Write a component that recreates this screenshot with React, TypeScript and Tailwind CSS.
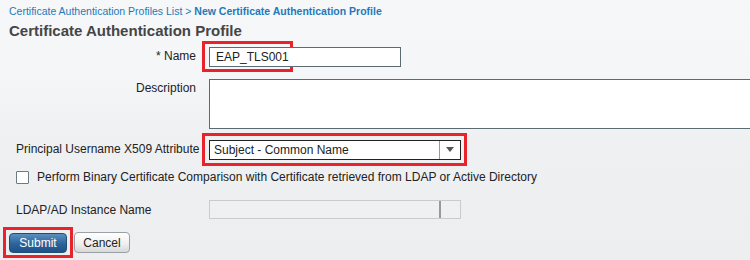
import React from "react";

export default function App() {
  const font = { fontFamily: '"Liberation Sans", Arial, sans-serif' };
  return (
    <div
      className="w-[750px] h-[260px] overflow-hidden bg-[linear-gradient(to_bottom,#f6f7f9_0px,#f5f6f8_70px,#eef0f2_140px,#eceef0_260px)] text-[12px] text-[#222]"
      style={font}
    >
      <div className="pl-[9px] pt-[4px] text-[10.5px] text-[#1f7ab8] leading-[14px] whitespace-nowrap">
        <span>Certificate Authentication Profiles List &gt; </span>
        <span className="font-bold">New Certificate Authentication Profile</span>
      </div>
      <div className="pl-[9px] pt-[4px] text-[15px] font-bold text-[#454545] leading-[18px]">
        Certificate Authentication Profile
      </div>

      {/* Name row */}
      <div className="flex mt-[1px] h-[31px] items-center">
        <div className="w-[196px] text-right self-start pt-[6px]">* Name</div>
        <div className="ml-[6px] border-[3px] border-[#e8232c] w-[91px] h-[31px] relative">
          <div className="absolute left-[4px] top-[3px] w-[192px] h-[20px] border border-[#5b6b73] bg-white flex items-center pl-[6px] text-[12px]">
            EAP_TLS001
          </div>
        </div>
      </div>

      {/* Description row */}
      <div className="flex mt-[7px]">
        <div className="w-[196px] text-right pt-[0px]">Description</div>
        <div className="ml-[13px] flex-1 h-[50px] border border-[#5b6b73] border-r-0 bg-white" />
      </div>

      {/* Principal row */}
      <div className="flex mt-[4px] items-start">
        <div className="w-[196px] pl-[16px] pt-[7px] whitespace-nowrap">Principal Username X509 Attribute</div>
        <div className="ml-[6px] border-[3px] border-[#e8232c] w-[265px] h-[33px] flex items-center pl-[4px]">
          <div className="w-[252px] h-[20px] border border-[#222] bg-white flex items-center">
            <div className="flex-1 pl-[4px] text-[12px]">Subject - Common Name</div>
            <div className="w-[21px] h-full border-l border-[#999] flex items-center justify-center">
              <svg width="8" height="5" viewBox="0 0 8 5">
                <path d="M0 0 L8 0 L4 5 Z" fill="#555" />
              </svg>
            </div>
          </div>
        </div>
      </div>

      {/* Checkbox row */}
      <div className="flex items-center mt-[4px] pl-[16px] h-[14px]">
        <div className="w-[13px] h-[13px] border border-[#6b7b83] bg-white rounded-[1px]" />
        <div className="ml-[8px]">
          Perform Binary Certificate Comparison with Certificate retrieved from LDAP or Active Directory
        </div>
      </div>

      {/* LDAP row */}
      <div className="flex mt-[16px] items-start">
        <div className="w-[209px] pl-[16px] pt-[1px]">LDAP/AD Instance Name</div>
        <div className="w-[252px] h-[19px] border border-[#c8cccf] bg-[#eef0f1] flex">
          <div className="flex-1" />
          <div className="w-[21px] border-l-2 border-[#999]" />
        </div>
      </div>

      {/* Buttons */}
      <div className="flex mt-[8px] items-center">
        <div className="ml-[3px] border-[3px] border-[#e8232c] w-[70px] h-[31px] pl-[3px] pt-[3px]">
          <button className="w-[58px] h-[20px] rounded-[4px] border border-[#1d4f7a] bg-[linear-gradient(to_bottom,#5b8fc0,#2c6399_55%,#1e5288)] text-white text-[12px] leading-[18px]">
            Submit
          </button>
        </div>
        <button className="ml-[1px] w-[56px] h-[21px] rounded-[4px] border border-[#9aa0a6] bg-[linear-gradient(to_bottom,#ffffff,#f0f0f0_55%,#d8d8d8)] text-[#222] text-[12px] leading-[18px]">
          Cancel
        </button>
      </div>
    </div>
  );
}
